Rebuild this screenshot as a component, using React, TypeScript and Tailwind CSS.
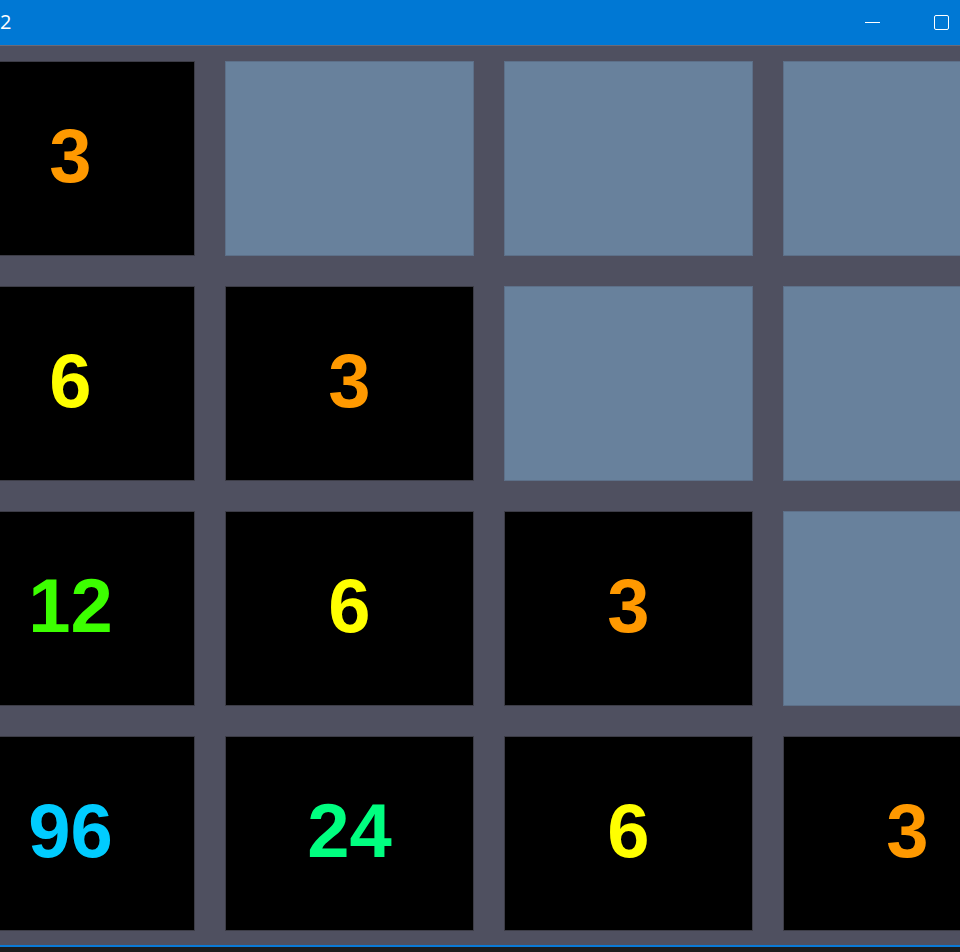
import React from 'react';

type Cell = number | null;

const board: Cell[][] = [
  [3, null, null, null],
  [6, 3, null, null],
  [12, 6, 3, null],
  [96, 24, 6, 3],
];

const tileColors: Record<number, string> = {
  3: 'text-[#ff9900]',
  6: 'text-[#ffff00]',
  12: 'text-[#3cff00]',
  24: 'text-[#00ff80]',
  96: 'text-[#00ccff]',
};

const Tile = ({ value }: { value: Cell }) => {
  if (value === null) {
    return <div className="w-[249px] h-[195px] shrink-0 bg-[#68819c] border border-[#5d7089]" />;
  }
  return (
    <div className="w-[249px] h-[195px] shrink-0 bg-black border border-[#3c3c46] flex items-center justify-center">
      <span
        className={`font-bold text-[76px] leading-none mt-[-5px] ${tileColors[value]}`}
        style={{ fontFamily: '"Liberation Sans", Arial, sans-serif' }}
      >
        {value}
      </span>
    </div>
  );
};

const App = () => {
  return (
    <div className="w-[960px] h-[952px] overflow-hidden bg-[#1b1b1b] flex flex-col">
      {/* title bar */}
      <div className="h-[45px] shrink-0 bg-[#0078d4] flex items-center text-white">
        <span
          className="text-[20px] ml-0 mt-[-1px]"
          style={{ fontFamily: '"Open Sans", "DejaVu Sans", sans-serif' }}
        >
          2
        </span>
        <div className="ml-auto flex items-center">
          <div className="w-[15px] h-px bg-white mr-[54px] mt-[-1px]" />
          <div className="w-[15px] h-[15px] border border-white rounded-[2px] mr-[11px] mt-[-1px]" />
        </div>
      </div>
      <div className="h-px shrink-0 bg-[#6a6a78]" />

      {/* board */}
      <div className="h-[899px] shrink-0 bg-[#4f5060] overflow-hidden pt-[15px]">
        <div className="flex flex-col gap-[30px] ml-[-54px]">
          {board.map((row, r) => (
            <div key={r} className="flex gap-[30px]">
              {row.map((v, c) => (
                <Tile key={c} value={v} />
              ))}
            </div>
          ))}
        </div>
      </div>
      <div className="h-[2px] shrink-0 bg-[#0a7ad6]" />
    </div>
  );
};

export default App;
